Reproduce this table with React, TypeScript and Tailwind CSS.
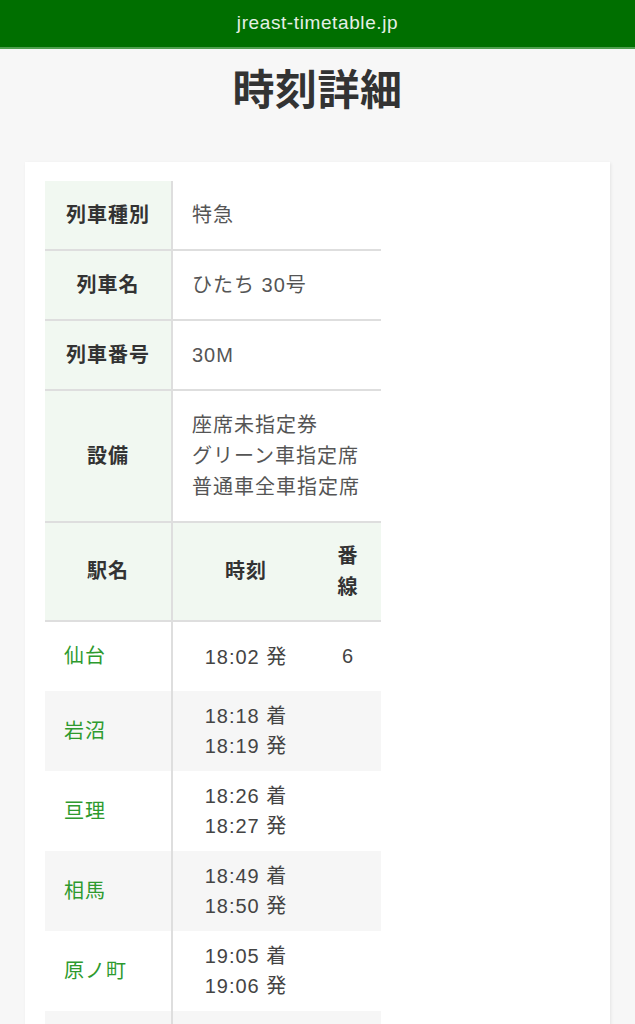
const font = { fontFamily: '"Liberation Sans", "Noto Sans CJK JP", sans-serif' };

const info = [
  { label: "列車種別", value: ["特急"] },
  { label: "列車名", value: ["ひたち 30号"] },
  { label: "列車番号", value: ["30M"] },
  { label: "設備", value: ["座席未指定券", "グリーン車指定席", "普通車全車指定席"] },
];

const stops = [
  { name: "仙台", times: ["18:02 発"], track: "6" },
  { name: "岩沼", times: ["18:18 着", "18:19 発"], track: "" },
  { name: "亘理", times: ["18:26 着", "18:27 発"], track: "" },
  { name: "相馬", times: ["18:49 着", "18:50 発"], track: "" },
  { name: "原ノ町", times: ["19:05 着", "19:06 発"], track: "" },
  { name: "浪江", times: ["19:22 着", "19:23 発"], track: "" },
];

export default function App() {
  return (
    <div className="min-h-screen bg-[#f7f7f7]" style={font}>
      {/* HEADER */}
      <header className="h-[49px] bg-[#006f00] border-b-2 border-[#4f9f4f] flex items-center justify-center">
        <span className="text-[19px] text-[#e6efe6] tracking-[0.6px]">jreast-timetable.jp</span>
      </header>

      {/* TITLE */}
      <h1 className="text-center text-[42px] font-bold text-[#333] leading-none pt-[21px] tracking-[0.5px]">時刻詳細</h1>

      {/* CARD */}
      <div className="mx-[25px] mt-[50px] bg-white shadow-[1px_1px_3px_rgba(0,0,0,0.08)] pl-5 pt-[19px] pb-8">
        <table className="border-collapse text-[20px] leading-[31px] tracking-[1px]">
          <colgroup>
            <col className="w-[127px]" />
            <col className="w-[147px]" />
            <col className="w-[62px]" />
          </colgroup>
          <tbody>
            {info.map((row) => (
              <tr key={row.label} className="border-b-2 border-[#dedede]">
                <th className="bg-[#f1f8f1] border-r-2 border-[#dedede] text-center font-bold text-[#333] py-[18.5px]">
                  {row.label}
                </th>
                <td colSpan={2} className="pl-[19px] py-[18.5px] text-[#555]">
                  {row.value.map((v) => (
                    <div key={v}>{v}</div>
                  ))}
                </td>
              </tr>
            ))}

            {/* STATION HEAD */}
            <tr className="bg-[#f1f8f1] border-b-2 border-[#dedede]">
              <th className="h-[99px] border-r-2 border-[#dedede] text-center font-bold text-[#333]">駅名</th>
              <th className="text-center font-bold text-[#333]">時刻</th>
              <th className="text-center font-bold text-[#333] pr-1">
                番
                <br />
                線
              </th>
            </tr>

            {stops.map((s, i) => (
              <tr key={s.name} className={i % 2 === 1 ? "bg-[#f6f6f6]" : "bg-white"}>
                <td
                  className={
                    "border-r-2 border-[#dedede] pl-[19px] text-[#2e9a2e] " +
                    (s.times.length > 1 ? "h-[80px]" : "h-[70px]")
                  }
                >
                  {s.name}
                </td>
                <td className="text-center text-[#444]">
                  {s.times.map((t) => (
                    <div key={t} className="leading-[30px]">
                      {t}
                    </div>
                  ))}
                </td>
                <td className="text-center text-[#444] pr-1">{s.track}</td>
              </tr>
            ))}
          </tbody>
        </table>
      </div>
    </div>
  );
}
